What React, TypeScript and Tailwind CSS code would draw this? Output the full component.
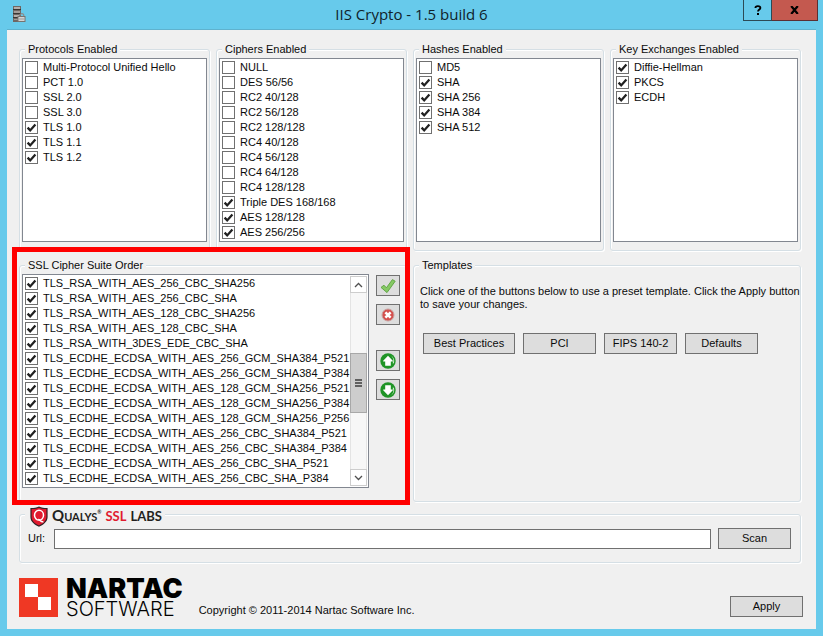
import React from "react";

const protocols: [string, boolean][] = [
  ["Multi-Protocol Unified Hello", false],
  ["PCT 1.0", false],
  ["SSL 2.0", false],
  ["SSL 3.0", false],
  ["TLS 1.0", true],
  ["TLS 1.1", true],
  ["TLS 1.2", true],
];

const ciphers: [string, boolean][] = [
  ["NULL", false],
  ["DES 56/56", false],
  ["RC2 40/128", false],
  ["RC2 56/128", false],
  ["RC2 128/128", false],
  ["RC4 40/128", false],
  ["RC4 56/128", false],
  ["RC4 64/128", false],
  ["RC4 128/128", false],
  ["Triple DES 168/168", true],
  ["AES 128/128", true],
  ["AES 256/256", true],
];

const hashes: [string, boolean][] = [
  ["MD5", false],
  ["SHA", true],
  ["SHA 256", true],
  ["SHA 384", true],
  ["SHA 512", true],
];

const exchanges: [string, boolean][] = [
  ["Diffie-Hellman", true],
  ["PKCS", true],
  ["ECDH", true],
];

const suites: [string, boolean][] = [
  ["TLS_RSA_WITH_AES_256_CBC_SHA256", true],
  ["TLS_RSA_WITH_AES_256_CBC_SHA", true],
  ["TLS_RSA_WITH_AES_128_CBC_SHA256", true],
  ["TLS_RSA_WITH_AES_128_CBC_SHA", true],
  ["TLS_RSA_WITH_3DES_EDE_CBC_SHA", true],
  ["TLS_ECDHE_ECDSA_WITH_AES_256_GCM_SHA384_P521", true],
  ["TLS_ECDHE_ECDSA_WITH_AES_256_GCM_SHA384_P384", true],
  ["TLS_ECDHE_ECDSA_WITH_AES_128_GCM_SHA256_P521", true],
  ["TLS_ECDHE_ECDSA_WITH_AES_128_GCM_SHA256_P384", true],
  ["TLS_ECDHE_ECDSA_WITH_AES_128_GCM_SHA256_P256", true],
  ["TLS_ECDHE_ECDSA_WITH_AES_256_CBC_SHA384_P521", true],
  ["TLS_ECDHE_ECDSA_WITH_AES_256_CBC_SHA384_P384", true],
  ["TLS_ECDHE_ECDSA_WITH_AES_256_CBC_SHA_P521", true],
  ["TLS_ECDHE_ECDSA_WITH_AES_256_CBC_SHA_P384", true],
];

function CheckItem({ label, checked }: { label: string; checked: boolean }) {
  return (
    <label className="flex h-[15px] items-center gap-[5px] whitespace-nowrap">
      <span className="grid shrink-0">
        <input
          type="checkbox"
          defaultChecked={checked}
          className="peer col-start-1 row-start-1 size-[13px] appearance-none border border-[#707070] bg-white"
        />
        <svg
          viewBox="0 0 13 13"
          className="pointer-events-none invisible col-start-1 row-start-1 size-[13px] peer-checked:visible"
        >
          <path d="M2.6 6.6 L5.2 9.4 L10.4 3.4" fill="none" stroke="#212121" strokeWidth="2.3" />
        </svg>
      </span>
      <span>{label}</span>
    </label>
  );
}

function CheckRows({ items }: { items: [string, boolean][] }) {
  return (
    <>
      {items.map(([label, checked]) => (
        <CheckItem key={label} label={label} checked={checked} />
      ))}
    </>
  );
}

function Group({ title, className, children }: { title: React.ReactNode; className: string; children: React.ReactNode }) {
  return (
    <fieldset className="min-w-0 rounded-[3px] border border-[#d5dfe5] shadow-[inset_1px_1px_0_#ffffff,1px_1px_0_#ffffff]">
      <legend className="ml-[5px] bg-[#f0f0f0] px-[3px] leading-[14px]">{title}</legend>
      <div className={className}>{children}</div>
    </fieldset>
  );
}

function ListGroup({ title, items }: { title: string; items: [string, boolean][] }) {
  return (
    <Group title={title} className="px-[2px] pt-[2px] pb-2">
      <div className="h-[184px] border border-[#828790] bg-white px-[2px] py-px">
        <CheckRows items={items} />
      </div>
    </Group>
  );
}

function PushButton({ children, className }: { children: React.ReactNode; className: string }) {
  return (
    <button
      type="button"
      className={"h-[21px] border border-[#707070] bg-[#dddddd] text-center leading-[19px] " + className}
    >
      {children}
    </button>
  );
}

function IconButton({ label, children }: { label: string; children: React.ReactNode }) {
  return (
    <button
      type="button"
      aria-label={label}
      className="flex h-[21px] w-6 items-center justify-center border border-[#707070] bg-[#dddddd]"
    >
      {children}
    </button>
  );
}

function ArrowDisc({ down }: { down?: boolean }) {
  return (
    <svg viewBox="0 0 16 16" className={down ? "size-4 -scale-y-100" : "size-4"}>
      <circle cx="8" cy="8" r="7.7" fill="#1f9426" />
      <path d="M10.5 2.2 A6.4 6.4 0 0 1 13.6 10.6 L12.6 10.2 A6 6 0 0 0 10.5 2.2 Z" fill="#d9f0d6" />
      <path d="M8 2.8 L12.8 7.8 V8.6 H10.8 V12.8 H5.2 V8.6 H3.2 V7.8 Z" fill="#ffffff" />
    </svg>
  );
}

function ScrollBar() {
  return (
    <div className="flex w-[17px] shrink-0 flex-col bg-[#f7f7f7]">
      <button type="button" aria-label="Scroll up" className="flex h-[17px] items-center justify-center border border-[#cdcdcd] bg-white">
        <svg viewBox="0 0 9 6" className="h-[6px] w-[9px]">
          <path d="M1 5 L4.5 1.5 L8 5" fill="none" stroke="#505050" strokeWidth="1.3" />
        </svg>
      </button>
      <div className="h-[60px] border-x border-[#e4e4e4]" />
      <div className="flex h-[60px] flex-col items-center justify-center gap-px border border-[#a8a8a8] bg-[#cdcdcd]">
        <span className="h-[2px] w-[7px] bg-[#606060]" />
        <span className="h-[2px] w-[7px] bg-[#606060]" />
        <span className="h-[2px] w-[7px] bg-[#606060]" />
      </div>
      <div className="flex-1 border-x border-[#e4e4e4]" />
      <button type="button" aria-label="Scroll down" className="flex h-[17px] items-center justify-center border border-[#cdcdcd] bg-white">
        <svg viewBox="0 0 9 6" className="h-[6px] w-[9px]">
          <path d="M1 1 L4.5 4.5 L8 1" fill="none" stroke="#505050" strokeWidth="1.3" />
        </svg>
      </button>
    </div>
  );
}

function ServerIcon() {
  return (
    <svg viewBox="0 0 14 18" className="h-[18px] w-[14px]">
      <rect x="1" y="1" width="8" height="16" fill="#6f6764" />
      <rect x="2" y="2" width="6" height="2" fill="#b5afac" />
      <rect x="2" y="6" width="6" height="2" fill="#a39c98" />
      <rect x="2" y="10" width="5" height="2" fill="#b5afac" />
      <rect x="2" y="14" width="4" height="1" fill="#a39c98" />
      <rect x="1" y="4" width="8" height="1" fill="#3a3533" />
      <rect x="1" y="8" width="8" height="1" fill="#3a3533" />
      <rect x="1" y="12" width="5" height="1" fill="#3a3533" />
      <path d="M7.8 12 V10.6 a2 2 0 0 1 4 0 V12" fill="none" stroke="#8c8c8c" strokeWidth="1.2" />
      <rect x="6" y="11.5" width="7" height="5" fill="#d4d4d4" stroke="#77736f" strokeWidth="1" />
      <path d="M7 14 H12" stroke="#9b9b9b" strokeWidth="1" />
    </svg>
  );
}

function QualysLogo() {
  return (
    <span className="flex h-5 items-start gap-1 pt-[2px] pl-[2px]">
      <svg viewBox="0 0 18 21" className="h-[21px] w-[18px] shrink-0">
        <path d="M9 0.4 C12 1.8 15 2 17.6 1.9 V11 C17.6 16 13 19 9 20.7 C5 19 0.4 16 0.4 11 V1.9 C3 2 6 1.8 9 0.4 Z" fill="#2d2124" />
        <path d="M9 1.7 C12 2.9 14.4 3.1 16.4 3.1 V11 C16.4 15.2 12.6 17.9 9 19.4 C5.4 17.9 1.6 15.2 1.6 11 V3.1 C3.6 3.1 6 2.9 9 1.7 Z" fill="#e01b2f" />
        <ellipse cx="9" cy="9.2" rx="4.5" ry="4.9" fill="none" stroke="#ffffff" strokeWidth="1.5" />
        <path d="M8.2 13.6 C9.8 13.4 10.6 16.4 13.4 15.8" fill="none" stroke="#ffffff" strokeWidth="1.5" />
      </svg>
      <span className="flex items-baseline gap-1 font-['Lato',sans-serif] text-[13px] leading-[18px] font-bold text-[#231f20]">
        <span className="flex items-baseline">
          <span className="text-[15px]">Q</span>
          <span className="text-[11px]">UALYS</span>
          <span className="self-start text-[5px] leading-[12px]">®</span>
        </span>
        <span className="text-[#e01b2f]">SSL</span>
        <span>LABS</span>
      </span>
    </span>
  );
}

function NartacLogo() {
  return (
    <div className="flex h-[39px] gap-2 text-black">
      <svg viewBox="0 0 39 39" className="size-[39px] shrink-0">
        <rect width="39" height="39" fill="#ef3824" />
        <rect x="6" y="6" width="13" height="13" fill="#ffffff" />
        <rect x="19" y="19" width="13" height="13" fill="#ffffff" />
      </svg>
      <div className="flex flex-col font-['Inter',sans-serif]">
        <span className="text-[27px] leading-[22px] font-black">NARTAC</span>
        <span className="text-[20px] leading-[19px] font-light">SOFTWARE</span>
      </div>
    </div>
  );
}

export default function App() {
  return (
    <div className="flex min-h-screen flex-col bg-[#67caeb] px-[7px] pb-[7px] font-['Liberation_Sans',Arial,sans-serif] text-[11px] leading-[13px] text-[#0b0b0b]">
      <header className="-mx-[7px] flex h-[29px] items-start pr-[5px] pl-3">
        <div className="flex w-[68px] pt-[5px]">
          <ServerIcon />
        </div>
        <h1 className="flex-1 text-center font-['Open_Sans',sans-serif] text-[15px] leading-[29px] text-[#10222a]">
          IIS Crypto - 1.5 build 6
        </h1>
        <div className="flex w-[75px]">
          <button type="button" aria-label="Help" className="flex h-[21px] w-[29px] items-center justify-center border border-t-0 border-[#2c4a55]">
            <svg viewBox="0 0 8 10" className="h-[10px] w-2">
              <path d="M1.4 3 C1.4 0.4 6.4 0.4 6.4 3 C6.4 4.6 4 4.6 4 6.6" fill="none" stroke="#000000" strokeWidth="1.8" />
              <rect x="3" y="8" width="2" height="2" fill="#000000" />
            </svg>
          </button>
          <button type="button" aria-label="Close" className="flex h-[21px] flex-1 items-center justify-center border-r border-b border-[#5b2f33] bg-[#c4594f]">
            <svg viewBox="0 0 9 8" className="h-2 w-[9px]">
              <path d="M1.2 0 L7.8 8 M7.8 0 L1.2 8" stroke="#000000" strokeWidth="2.2" />
            </svg>
          </button>
        </div>
      </header>

      <main className="flex flex-1 flex-col border-t border-[#5fb2ce] bg-[#f0f0f0] pt-3 pr-[15px] pb-3 pl-3">
        <div className="grid grid-cols-4 gap-[6px]">
          <ListGroup title="Protocols Enabled" items={protocols} />
          <ListGroup title="Ciphers Enabled" items={ciphers} />
          <ListGroup title="Hashes Enabled" items={hashes} />
          <ListGroup title="Key Exchanges Enabled" items={exchanges} />
        </div>

        <div className="mt-[7px] grid grid-cols-2 gap-[6px]">
          <div className="relative">
            <Group title="SSL Cipher Suite Order" className="px-[2px] pt-[2px] pb-[13px]">
              <div className="flex gap-[7px] pr-1">
                <div className="flex h-[214px] min-w-0 flex-1 border border-[#828790] bg-white p-px">
                  <div className="min-w-0 flex-1 overflow-hidden pl-px">
                    <CheckRows items={suites} />
                  </div>
                  <ScrollBar />
                </div>
                <div className="flex flex-col gap-2 pt-px">
                  <IconButton label="Check all">
                    <svg viewBox="0 0 16 16" className="size-4">
                      <path d="M1 9.4 L4 7.2 L6.4 9.8 L12.4 1.6 L15.2 3.2 L7 14.6 Z" fill="#86c964" stroke="#5aa03e" strokeWidth="0.9" strokeLinejoin="round" />
                    </svg>
                  </IconButton>
                  <IconButton label="Uncheck all">
                    <svg viewBox="0 0 14 14" className="size-[14px]">
                      <circle cx="7" cy="7" r="6" fill="#d4504e" stroke="#c9a3a1" strokeWidth="1" />
                      <path d="M4.4 4.4 L9.6 9.6 M9.6 4.4 L4.4 9.6" stroke="#ffffff" strokeWidth="2.6" />
                    </svg>
                  </IconButton>
                  <div className="mt-[17px] flex flex-col gap-2">
                    <IconButton label="Move up">
                      <ArrowDisc />
                    </IconButton>
                    <IconButton label="Move down">
                      <ArrowDisc down />
                    </IconButton>
                  </div>
                </div>
              </div>
            </Group>
            <div className="pointer-events-none absolute -top-[11px] -right-[3px] -bottom-[3px] -left-[7px] border-[5px] border-[#ff0000]" />
          </div>

          <Group title="Templates" className="pt-[13px] pl-[6px]">
            <p>
              Click one of the buttons below to use a preset template. Click the Apply button to save your changes.
            </p>
            <div className="mt-[22px] ml-[3px] flex gap-2">
              <PushButton className="w-[92px]">Best Practices</PushButton>
              <PushButton className="w-[73px]">PCI</PushButton>
              <PushButton className="w-[73px]">FIPS 140-2</PushButton>
              <PushButton className="w-[73px]">Defaults</PushButton>
            </div>
          </Group>
        </div>

        <div className="mt-[2px]">
          <Group title={<QualysLogo />} className="pt-1 pr-[9px] pb-[13px] pl-2">
            <div className="flex items-center gap-[7px]">
              <label htmlFor="url" className="w-[19px]">
                Url:
              </label>
              <input id="url" type="text" className="h-5 min-w-0 flex-1 border border-[#707070] bg-white px-1" />
              <PushButton className="w-[73px]">Scan</PushButton>
            </div>
          </Group>
        </div>

        <footer className="mt-auto -mr-[2px] flex items-end">
          <NartacLogo />
          <p className="ml-4">Copyright © 2011-2014 Nartac Software Inc.</p>
          <PushButton className="ml-auto w-[73px]">Apply</PushButton>
        </footer>
      </main>
    </div>
  );
}
